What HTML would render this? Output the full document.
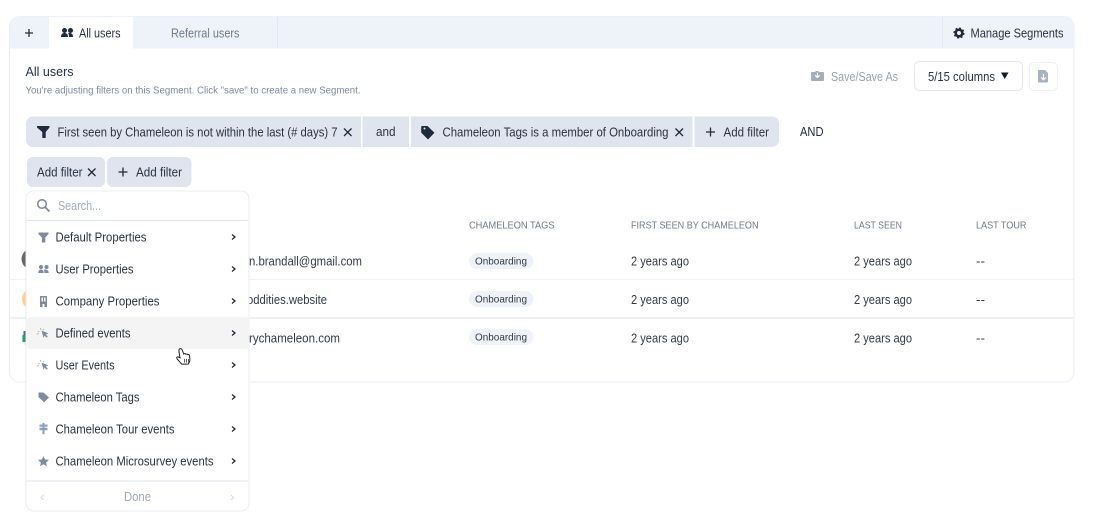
<!DOCTYPE html>
<html><head><meta charset="utf-8"><style>
html,body{margin:0;padding:0;background:#fff;width:1097px;height:527px;overflow:hidden}
svg{display:block;filter:blur(.3px)}
text{font-family:"Liberation Sans",sans-serif;font-size:12.500px;fill:#2b3442}
.g{fill:#7c8ba1}
.x{stroke:#1f2b3a;stroke-width:1.300;fill:none}
.c{stroke:#1f2b3a;stroke-width:1.300;fill:none}
.h{font-size:10.500px;fill:#6f7a8a}
.m{fill:#343c49}
</style></head><body>
<svg width="1097" height="527" viewBox="0 0 1097 527" xmlns="http://www.w3.org/2000/svg">
<!-- card -->
<rect x="9.500" y="16.500" width="1064.500" height="365.500" rx="10" fill="#fff" stroke="#e8eef8"/>
<path d="M10 48.500V26a9.500 9.500 0 0 1 9.500-9.500H1064.500a9.500 9.500 0 0 1 9.500 9.500V48.500Z" fill="#eef2f9"/>
<rect x="49" y="17" width="84" height="32" fill="#fff"/>
<path d="M277.500 17V48M942.500 17V48" stroke="#e3e8f2"/>
<path d="M25 33H33M29 29V37" stroke="#27303d" stroke-width="1.300"/>
<g fill="#1f2b3a"><circle cx="64.500" cy="30.500" r="2.500"/><circle cx="70.500" cy="30.500" r="2.500"/><path d="M61 37c0-3 1.500-4 3.500-4s3.500 1 3.500 4ZM69 37c0-2-.3-3-1-4 2.500-.5 5 .5 5 4Z"/></g>
<text x="79" y="37.500" textLength="41.500" lengthAdjust="spacingAndGlyphs">All users</text>
<text x="171" y="37.500" textLength="68.500" lengthAdjust="spacingAndGlyphs" class="g" style="fill:#6f7d91">Referral users</text>
<circle cx="959" cy="33" r="3.300" fill="none" stroke="#1f2b3a" stroke-width="2.600"/>
<circle cx="959" cy="33" r="4.800" fill="none" stroke="#1f2b3a" stroke-width="1.500" stroke-dasharray="1.900 1.870"/>
<text x="970.500" y="37.500" textLength="93" lengthAdjust="spacingAndGlyphs">Manage Segments</text>

<!-- header -->
<text x="25.500" y="76" textLength="48" lengthAdjust="spacingAndGlyphs" style="font-size:13px">All users</text>
<text x="25.500" y="93.500" textLength="335" lengthAdjust="spacingAndGlyphs" style="font-size:10.500px;fill:#7d8a9c">You're adjusting filters on this Segment. Click "save" to create a new Segment.</text>

<path d="M812 72h3l1-1h2l1 1h4a1 1 0 0 1 1 1v7a1 1 0 0 1-1 1h-11a1 1 0 0 1-1-1v-7a1 1 0 0 1 1-1Z" fill="#a6aeba"/>
<path d="M817.500 72.500v4.500M815.300 75.300l2.200 2.200 2.200-2.200" stroke="#fff" stroke-width="1.200" fill="none"/>
<text x="831" y="81" textLength="67" lengthAdjust="spacingAndGlyphs" style="fill:#9aa3af">Save/Save As</text>
<rect x="914.500" y="61.500" width="108" height="29" rx="5" fill="#fff" stroke="#e3e8f0"/>
<text x="928" y="81" textLength="67" lengthAdjust="spacingAndGlyphs">5/15 columns</text>
<path d="M1001 72.500h7.500l-3.750 6.500Z" fill="#111827"/>
<rect x="1029.500" y="62.500" width="28" height="28" rx="5" fill="#fff" stroke="#edf0f6"/>
<path d="M1039 70h6l3 3v8.500a1 1 0 0 1-1 1h-8a1 1 0 0 1-1-1V71a1 1 0 0 1 1-1Z" fill="#a9b2c0"/>
<path d="M1043.500 74v5.500M1041.200 77.500l2.300 2.300 2.300-2.300" stroke="#fff" stroke-width="1.200" fill="none"/>

<!-- chips row 1 -->
<path d="M33 116.500H361V147H33a7 7 0 0 1-7-7V123.500a7 7 0 0 1 7-7Z" fill="#dfe4ee"/>
<rect x="362.500" y="116.500" width="46.500" height="30.500" fill="#dfe4ee"/>
<rect x="411" y="116.500" width="281.500" height="30.500" fill="#dfe4ee"/>
<path d="M694.500 116.500H772a7 7 0 0 1 7 7V140a7 7 0 0 1-7 7H694.500Z" fill="#dfe4ee"/>
<path d="M37 126h12.500v1.500l-3.800 4.500V138h-3.400V132l-5.300-4.500Z" fill="#1f2b3a"/>
<text x="57.500" y="136.500" textLength="280" lengthAdjust="spacingAndGlyphs">First seen by Chameleon is not within the last (# days) 7</text>
<path class="x" d="M344 128.500l7.500 7.500M351.500 128.500l-7.500 7.500"/>
<text x="376" y="136" textLength="19.500" lengthAdjust="spacingAndGlyphs">and</text>
<path d="M422 126h5.500l7 6.800-6.500 6.700-6.800-6.900V127a1 1 0 0 1 .8-1Z" fill="#1f2b3a"/>
<circle cx="424.500" cy="128.500" r="1" fill="#dfe4ee"/>
<text x="442.500" y="136.500" textLength="226" lengthAdjust="spacingAndGlyphs">Chameleon Tags is a member of Onboarding</text>
<path class="x" d="M675.500 128.500l7.500 7.500M683 128.500l-7.500 7.500"/>
<path class="x" d="M706 132h9M710.500 127.500v9"/>
<text x="723.500" y="136.500" textLength="45.500" lengthAdjust="spacingAndGlyphs">Add filter</text>
<text x="800" y="136" textLength="23.500" lengthAdjust="spacingAndGlyphs" style="fill:#1f2937">AND</text>

<!-- chips row 2 -->
<rect x="27" y="157" width="78" height="30" rx="6" fill="#dfe4ee"/>
<rect x="107" y="157" width="84.500" height="30" rx="6" fill="#dfe4ee"/>
<text x="37" y="176.500" textLength="45.500" lengthAdjust="spacingAndGlyphs">Add filter</text>
<path class="x" d="M88 168.500l7.500 7.500M95.500 168.500l-7.500 7.500"/>
<path class="x" d="M118.500 172h9M123 167.500v9"/>
<text x="136" y="176.500" textLength="46" lengthAdjust="spacingAndGlyphs">Add filter</text>

<!-- table -->
<text x="469" y="228.500" textLength="85.500" lengthAdjust="spacingAndGlyphs" class="h">CHAMELEON TAGS</text>
<text x="631" y="228.500" textLength="127.500" lengthAdjust="spacingAndGlyphs" class="h">FIRST SEEN BY CHAMELEON</text>
<text x="854" y="228.500" textLength="48" lengthAdjust="spacingAndGlyphs" class="h">LAST SEEN</text>
<text x="976" y="228.500" textLength="50.500" lengthAdjust="spacingAndGlyphs" class="h">LAST TOUR</text>
<path d="M10 279.500H1073" stroke="#eef0f5"/>
<path d="M10 318H1073" stroke="#ececee" stroke-width="1.600"/>

<circle cx="32" cy="259" r="10.500" fill="#6b6763"/>
<circle cx="33" cy="299" r="11" fill="#fbd28c"/>
<circle cx="33" cy="338" r="11" fill="#e8ecef"/>
<path d="M22.500 335h4v7h-4Z" fill="#2c9a63"/><path d="M23.500 331h3v4h-3Z" fill="#3d6fd0"/>

<text x="249" y="265.500" textLength="113" lengthAdjust="spacingAndGlyphs" class="m">n.brandall@gmail.com</text>
<text x="247" y="304" textLength="80" lengthAdjust="spacingAndGlyphs" class="m">oddities.website</text>
<text x="249" y="342.500" textLength="91" lengthAdjust="spacingAndGlyphs" class="m">rychameleon.com</text>

<g fill="#eff2f8">
<rect x="469" y="253" width="64.500" height="16" rx="8"/>
<rect x="469" y="291" width="64.500" height="16" rx="8"/>
<rect x="469" y="329" width="64.500" height="16" rx="8"/>
</g>
<text x="475" y="264.500" textLength="52" lengthAdjust="spacingAndGlyphs" style="font-size:10.500px" class="m">Onboarding</text>
<text x="475" y="302.500" textLength="52" lengthAdjust="spacingAndGlyphs" style="font-size:10.500px" class="m">Onboarding</text>
<text x="475" y="340.500" textLength="52" lengthAdjust="spacingAndGlyphs" style="font-size:10.500px" class="m">Onboarding</text>
<text x="631" y="265.500" textLength="58" lengthAdjust="spacingAndGlyphs" class="m">2 years ago</text>
<text x="631" y="304" textLength="58" lengthAdjust="spacingAndGlyphs" class="m">2 years ago</text>
<text x="631" y="342.500" textLength="58" lengthAdjust="spacingAndGlyphs" class="m">2 years ago</text>
<text x="854" y="265.500" textLength="58" lengthAdjust="spacingAndGlyphs" class="m">2 years ago</text>
<text x="854" y="304" textLength="58" lengthAdjust="spacingAndGlyphs" class="m">2 years ago</text>
<text x="854" y="342.500" textLength="58" lengthAdjust="spacingAndGlyphs" class="m">2 years ago</text>
<text x="976" y="265.500" textLength="9" lengthAdjust="spacingAndGlyphs" class="m">--</text>
<text x="976" y="304" textLength="9" lengthAdjust="spacingAndGlyphs" class="m">--</text>
<text x="976" y="342.500" textLength="9" lengthAdjust="spacingAndGlyphs" class="m">--</text>

<!-- dropdown -->
<rect x="26" y="191" width="223" height="320" rx="8" fill="#fff" stroke="#e8edf6"/>
<path d="M27 220.500H248" stroke="#dbe3f0"/>
<rect x="27" y="317" width="222" height="32" rx="3" fill="#f4f4f4"/>
<path d="M27 481H248" stroke="#e3e9f4" stroke-width="1.200"/>
<circle cx="42" cy="204" r="4.300" fill="none" stroke="#7c8799" stroke-width="1.500"/>
<path d="M45.200 207.200L49.500 211.500" stroke="#7c8799" stroke-width="1.700"/>
<text x="58" y="210" textLength="43" lengthAdjust="spacingAndGlyphs" style="fill:#a4adbb">Search...</text>

<g fill="#7c8ba1">
<path d="M38.500 232.500h10v1.500l-3.200 3.500v5h-3.400v-5L38.500 234Z"/>
<circle cx="41" cy="267" r="2"/><circle cx="46.500" cy="267" r="2"/><path d="M38.300 273c0-2.500 1-3.500 2.700-3.500s2.700 1 2.700 3.500ZM44.500 273c0-1.500-.2-2.500-.8-3.300 2-.5 5 0 5 3.300Z"/>
<path d="M40 296h7v11h-2.500v-3h-2v3H40Zm1.500 1.500v4h1.500v-4Zm2.500 0v4h1.500v-4Z" fill-rule="evenodd"/>
<path d="M41.500 330.500l7 3-2.700 1 2 2.300-1.200 1-2-2.300-1 2.500Z"/>
<path d="M41.500 362.500l7 3-2.700 1 2 2.300-1.200 1-2-2.300-1 2.500Z"/>
<path d="M38.500 392.500h5l5.500 5-4.800 4.800-5.700-5.200Z"/>
<path d="M42.500 423h2v1.500h3v2.200h-3v1h3v2.500h-3v4h-2v-4h-3v-2.500h3v-1h-3v-2.200h3Z" fill="#8ba0bd"/>
<path d="M43.500 456l1.600 3.500 3.900.4-2.900 2.600.8 3.800-3.400-2-3.400 2 .8-3.800-2.900-2.600 3.900-.4Z"/>
</g>
<g stroke="#a9b4c4" stroke-width="1" fill="none">
<path d="M38 331l1.500 1M40.500 328l.3 1.800M37 334l1.700-.4M44 329l-.8 1"/>
<path d="M38 363l1.500 1M40.500 360l.3 1.800M37 366l1.700-.4M44 361l-.8 1"/>
</g>

<g>
<text x="55.500" y="241.500" textLength="91" lengthAdjust="spacingAndGlyphs">Default Properties</text>
<text x="55.500" y="273.500" textLength="78" lengthAdjust="spacingAndGlyphs">User Properties</text>
<text x="55.500" y="305.500" textLength="104" lengthAdjust="spacingAndGlyphs">Company Properties</text>
<text x="55.500" y="337.500" textLength="75" lengthAdjust="spacingAndGlyphs">Defined events</text>
<text x="55.500" y="369.500" textLength="59" lengthAdjust="spacingAndGlyphs">User Events</text>
<text x="55.500" y="401.500" textLength="84" lengthAdjust="spacingAndGlyphs">Chameleon Tags</text>
<text x="55.500" y="433.500" textLength="119" lengthAdjust="spacingAndGlyphs">Chameleon Tour events</text>
<text x="55.500" y="465.500" textLength="158" lengthAdjust="spacingAndGlyphs">Chameleon Microsurvey events</text>
</g>
<g class="c">
<path d="M232 234.500l3 2.500-3 2.500"/><path d="M232 266.500l3 2.500-3 2.500"/><path d="M232 298.500l3 2.500-3 2.500"/><path d="M232 330.500l3 2.500-3 2.500"/>
<path d="M232 362.500l3 2.500-3 2.500"/><path d="M232 394.500l3 2.500-3 2.500"/><path d="M232 426.500l3 2.500-3 2.500"/><path d="M232 458.500l3 2.500-3 2.500"/>
</g>
<path d="M43.500 495l-2.500 2.500 2.500 2.500" stroke="#d5dae3" fill="none"/>
<text x="124" y="501" textLength="27" lengthAdjust="spacingAndGlyphs" style="fill:#a2a9b5">Done</text>
<path d="M231 495l2.500 2.500-2.500 2.500" stroke="#d5dae3" fill="none"/>

<!-- hand cursor -->
<path d="M179.500 349c1-.8 2.300-.3 2.700 1l1.600 4c.5-.6 1.500-.5 2 .2.500-.4 1.500-.3 1.900.4.700-.3 1.600 0 1.800 1l.4 3.500c.1 2.200-.6 3.600-1.700 5h-6.500c-1.500-1.500-3-3.500-4.600-5.200-1-1-.2-2.300 1-2l1.900 1-1-6c-.2-1.300-.1-2.400.5-2.900Z" fill="#fff" stroke="#222" stroke-width="1"/>
<path d="M184.500 359v3.500M186.500 359v3.500M188.500 359v3.500" stroke="#222" stroke-width=".7"/>
</svg>
</body></html>
